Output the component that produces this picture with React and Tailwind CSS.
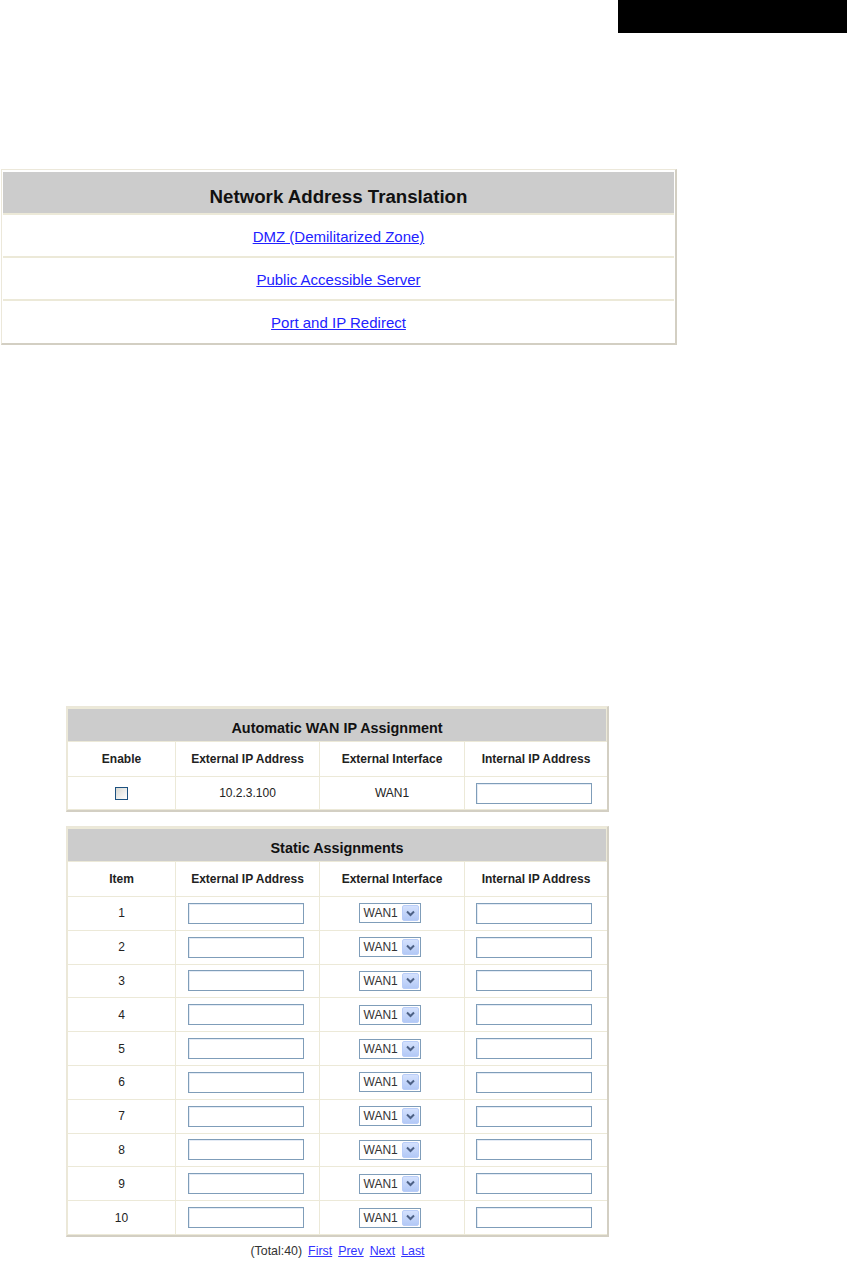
import React from "react";

const font = { fontFamily: '"Liberation Sans", Arial, sans-serif' };

function TextInput() {
  return (
    <div className="w-[116px] h-[21px] border border-[#7f9db9] bg-white shadow-[inset_1px_1px_0_#e4ebf5]" />
  );
}

function WanSelect() {
  return (
    <div className="w-[62px] h-[20px] border border-[#7f9db9] bg-white flex items-center justify-between pl-[4px] pr-[1px]">
      <span className="text-[12px] text-[#333]">WAN1</span>
      <div className="w-[17px] h-[16px] rounded-[2px] border border-[#b9cdf8] bg-linear-to-b from-[#d4e1fd] to-[#b3c9f6] flex items-center justify-center">
        <svg width="9" height="7" viewBox="0 0 9 7">
          <path d="M1 1.5 L4.5 5 L8 1.5" fill="none" stroke="#4d6185" strokeWidth="2" />
        </svg>
      </div>
    </div>
  );
}

function Checkbox() {
  return (
    <div className="w-[13px] h-[13px] border border-[#1c5180] bg-linear-to-br from-[#d8d8d2] to-white" />
  );
}

const cols = "grid grid-cols-[107px_143px_144px_142px] gap-x-px";

function HeaderCells({ first }) {
  const labels = [first, "External IP Address", "External Interface", "Internal IP Address"];
  return (
    <div className={`${cols} bg-[#ece9d8] mt-px`}>
      {labels.map((l) => (
        <div key={l} className="bg-white h-[34px] flex items-center justify-center text-[12px] font-bold text-[#222]">
          {l}
        </div>
      ))}
    </div>
  );
}

function Panel({ title, children }) {
  return (
    <div className="w-[543px] border-t border-l border-[#ebe7d9] border-r-2 border-b-2 border-r-[#d3cfc3] border-b-[#d3cfc3] pt-[2px] px-px pb-px bg-[#ece9d8]">
      <div className="bg-[#cccccc] h-[32px] flex items-center justify-center pt-[7px] text-[14.4px] font-bold text-[#111]">
        {title}
      </div>
      {children}
    </div>
  );
}

export default function App() {
  const rows = Array.from({ length: 10 }, (_, i) => i + 1);
  return (
    <div className="w-[847px] min-h-[1263px] bg-white relative" style={font}>
      <div className="flex justify-end">
        <div className="w-[229px] h-[33px] bg-black" />
      </div>

      {/* NAT table */}
      <div className="mt-[136px] ml-px w-[676px] border-t border-l border-[#ece8da] border-r-2 border-b-2 border-r-[#d3cfc3] border-b-[#d3cfc3] pt-[2px] px-px pb-px bg-white">
        <div className="bg-[#cccccc] h-[41px] flex items-center justify-center pt-[10px] text-[18.7px] font-bold text-[#111]">
          Network Address Translation
        </div>
        {["DMZ (Demilitarized Zone)", "Public Accessible Server", "Port and IP Redirect"].map((t) => (
          <div key={t} className="h-[43px] border-t-2 border-[#ece9d8] flex items-center justify-center pt-[4px]">
            <a href="#" className="text-[15px] text-[#2222ff] underline">
              {t}
            </a>
          </div>
        ))}
      </div>

      {/* Automatic WAN IP Assignment */}
      <div className="mt-[361px] ml-[66px]">
        <Panel title="Automatic WAN IP Assignment">
          <HeaderCells first="Enable" />
          <div className={`${cols} bg-[#ece9d8] mt-px`}>
            <div className="bg-white h-[32px] flex items-center justify-center">
              <Checkbox />
            </div>
            <div className="bg-white h-[32px] flex items-center justify-center text-[12px] text-[#222]">10.2.3.100</div>
            <div className="bg-white h-[32px] flex items-center justify-center text-[12px] text-[#222]">WAN1</div>
            <div className="bg-white h-[32px] flex items-center justify-center pr-[5px]">
              <TextInput />
            </div>
          </div>
        </Panel>
      </div>

      {/* Static Assignments */}
      <div className="mt-[14px] ml-[66px]">
        <Panel title="Static Assignments">
          <HeaderCells first="Item" />
          {rows.map((n) => (
            <div key={n} className={`${cols} bg-[#ece9d8] mt-px`}>
              <div className="bg-white h-[32.8px] flex items-center justify-center text-[12px] text-[#222]">{n}</div>
              <div className="bg-white h-[32.8px] flex items-center justify-center pr-[3px]">
                <TextInput />
              </div>
              <div className="bg-white h-[32.8px] flex items-center justify-center pr-[5px]">
                <WanSelect />
              </div>
              <div className="bg-white h-[32.8px] flex items-center justify-center pr-[5px]">
                <TextInput />
              </div>
            </div>
          ))}
        </Panel>
        <div className="w-[543px] mt-[7px] flex justify-center items-center gap-[6px] text-[12.4px] leading-[14px] text-[#333]">
          <span>(Total:40)</span>
          {["First", "Prev", "Next", "Last"].map((l) => (
            <a key={l} href="#" className="text-[#3333ff] underline">
              {l}
            </a>
          ))}
        </div>
      </div>
    </div>
  );
}
